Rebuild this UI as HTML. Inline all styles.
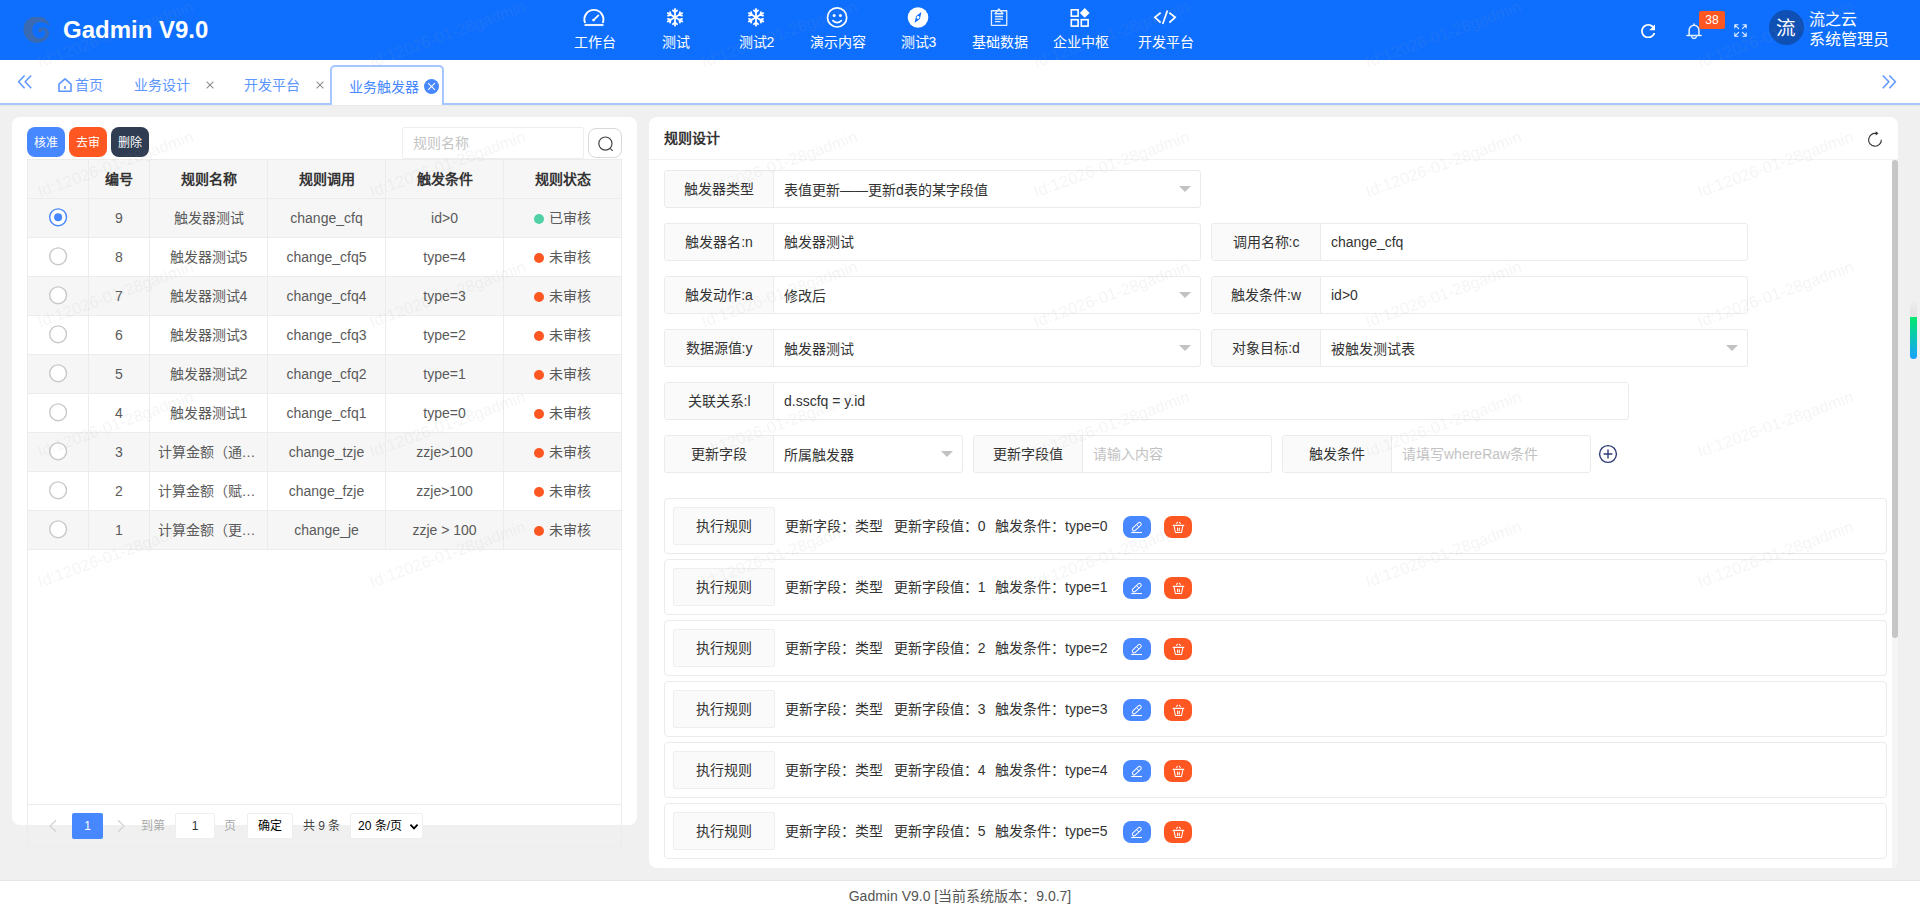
<!DOCTYPE html><html lang="zh-CN"><head><meta charset="utf-8"><title>Gadmin V9.0</title><style>
*{box-sizing:border-box;margin:0;padding:0}
html,body{width:1920px;height:911px;overflow:hidden}
body{font-family:"Liberation Sans",sans-serif;font-size:14px;color:#333;background:#f0f0f0;position:relative}
.abs{position:absolute}
svg{display:block}
#hd{position:absolute;left:0;top:0;width:1920px;height:60px;background:#0e6fff;color:#fff}
#logo{position:absolute;left:23px;top:17px;width:27px;height:27px}
#title{position:absolute;left:63px;top:15px;font-size:24px;font-weight:bold;line-height:30px;white-space:nowrap;letter-spacing:0}
.nav{position:absolute;top:0;height:60px;width:100px;margin-left:-50px;text-align:center;white-space:nowrap}
.nav svg{position:absolute;left:50%;top:6px;margin-left:-12px;width:22px;height:22px;overflow:visible}
.nav span{position:absolute;left:0;width:100px;top:32px;line-height:20px;font-size:14px}
#tabs{position:absolute;left:0;top:60px;width:1920px;height:45px;background:#fff;border-bottom:2px solid #a6c6ff}
.tab{position:absolute;top:15px;line-height:20px;font-size:14px;color:#5c96ff;white-space:nowrap}
.tx{position:absolute;top:19.5px;width:10px;height:10px}
#atab{position:absolute;left:330px;top:5px;width:114px;height:40px;border:2px solid #a6c6ff;border-bottom:0;border-radius:5px 5px 0 0;background:#fff}
#lcard{position:absolute;left:12px;top:117px;width:625px;height:708px;background:#fff;border-radius:8px}
#rcard{position:absolute;left:649px;top:117px;width:1249px;height:751px;background:#fff;border-radius:8px;overflow:hidden}
.btn{position:absolute;top:127px;width:38px;height:30px;border-radius:8px;color:#fff;font-size:12px;line-height:30px;padding-top:1px;text-align:center}
#tbl{position:absolute;left:27px;top:159px;width:595px;height:688px;border:1px solid #ececec}
.tr{position:absolute;left:0;width:593px;height:39px;border-bottom:1px solid #ececec}
.tr.g{background:#f6f6f6}
.td{position:absolute;top:0;height:38px;line-height:38px;text-align:center;border-right:1px solid #ececec;color:#5a5a5a;font-size:14px;white-space:nowrap;overflow:hidden}
.th .td{font-weight:bold;color:#333}
.c0{left:0;width:61px}.c1{left:61px;width:61px}.c2{left:122px;width:118px}.c3{left:240px;width:118px}.c4{left:358px;width:118px}.c5{left:476px;width:117px;border-right:0}
.rd{position:absolute;left:20px;top:8px;width:20px;height:20px}
.dot{display:inline-block;width:10px;height:10px;border-radius:50%;background:#ff5722;margin-right:5px;vertical-align:-0.5px}
.dot.ok{background:#4fd1a5}
.fi{position:absolute;height:38px;border:1px solid #ebebeb;border-radius:3px;background:#fff}
.fi .lb{position:absolute;left:0;top:0;width:109px;height:36px;line-height:36px;text-align:center;background:#fafafa;border-right:1px solid #ebebeb;border-radius:2px 0 0 2px;color:#333;white-space:nowrap}
.fi .v{position:absolute;left:119px;top:0;line-height:37px;white-space:nowrap;color:#333}
.fi .v.ph{color:#c2c2c2}
.fi .car{position:absolute;right:9px;top:15px;width:0;height:0;border-left:6px solid transparent;border-right:6px solid transparent;border-top:6px solid #c2c2c2}
.rule{position:absolute;left:15px;width:1223px;height:56px;border:1px solid #ebebeb;border-radius:4px}
.rule .lb{position:absolute;left:8px;top:8px;width:102px;height:38px;line-height:36px;text-align:center;background:#fafafa;border:1px solid #eee;border-radius:2px;color:#333}
.rule .t{position:absolute;left:120px;top:0;line-height:54px;white-space:nowrap;color:#333}
.rule .t i{font-style:normal;margin-left:10.7px}
.rule .b{position:absolute;top:17px;width:28px;height:22px;border-radius:8px}
.rule .b svg{position:absolute;left:8px;top:5px;width:12px;height:12px;overflow:visible}
#ft{position:absolute;left:0;top:880px;width:1920px;height:31px;background:#fff;border-top:1px solid #e6e6e6;text-align:center;line-height:31px;color:#555;font-size:14px}
.pg{position:absolute;font-size:12px;line-height:26px;white-space:nowrap}
</style></head><body>
<div id="hd">
<div id="logo"><svg viewBox="0 0 27 27" width="27" height="27"><path d="M26.9 9.6A13.4 13.4 0 1 0 26.2 17.6C26.4 14.2 24 10.6 20 10.6C17 10.6 15 11.8 15 13.3C15 14.7 16.4 15.3 17.7 15.1C18.7 14.9 19.3 14.4 19.2 13.9C18.6 13.3 18 13.3 17.7 13.4C19.2 12.2 21.5 12.6 22.2 14.8C23 17.2 21.8 20 18.5 21.1C14 22.4 9.4 19 9.4 13.3C9.4 8 13 5 16.7 5C21 5 24.5 7 26.9 9.6Z" fill="#3a6ab2"/></svg></div><div id="title">Gadmin V9.0</div>
<div class="nav" style="left:594.5px"><svg viewBox="0 0 22 22"><path d="M2.1 17A9.5 9.5 0 1 1 19.7 17" fill="none" stroke="#fff" stroke-width="1.9"/><path d="M1.5 19H20.5" stroke="#fff" stroke-width="2.1" opacity=".9"/><path d="M10.6 14.1L15.4 9.3" stroke="#fff" stroke-width="1.7" stroke-linecap="round"/><circle cx="10.6" cy="14.1" r="1.4" fill="#fff"/></svg><span>工作台</span></div>
<div class="nav" style="left:675.5px"><svg viewBox="0 0 22 22"><g fill="none" stroke="#fff" stroke-width="1.75" stroke-linecap="round"><g transform="rotate(0 11 11.3)"><path d="M11 11.3V2.9M11 6.3L8.9 4.4M11 6.3L13.1 4.4"/></g><g transform="rotate(60 11 11.3)"><path d="M11 11.3V2.9M11 6.3L8.9 4.4M11 6.3L13.1 4.4"/></g><g transform="rotate(120 11 11.3)"><path d="M11 11.3V2.9M11 6.3L8.9 4.4M11 6.3L13.1 4.4"/></g><g transform="rotate(180 11 11.3)"><path d="M11 11.3V2.9M11 6.3L8.9 4.4M11 6.3L13.1 4.4"/></g><g transform="rotate(240 11 11.3)"><path d="M11 11.3V2.9M11 6.3L8.9 4.4M11 6.3L13.1 4.4"/></g><g transform="rotate(300 11 11.3)"><path d="M11 11.3V2.9M11 6.3L8.9 4.4M11 6.3L13.1 4.4"/></g></g></svg><span>测试</span></div>
<div class="nav" style="left:756.5px"><svg viewBox="0 0 22 22"><g fill="none" stroke="#fff" stroke-width="1.75" stroke-linecap="round"><g transform="rotate(0 11 11.3)"><path d="M11 11.3V2.9M11 6.3L8.9 4.4M11 6.3L13.1 4.4"/></g><g transform="rotate(60 11 11.3)"><path d="M11 11.3V2.9M11 6.3L8.9 4.4M11 6.3L13.1 4.4"/></g><g transform="rotate(120 11 11.3)"><path d="M11 11.3V2.9M11 6.3L8.9 4.4M11 6.3L13.1 4.4"/></g><g transform="rotate(180 11 11.3)"><path d="M11 11.3V2.9M11 6.3L8.9 4.4M11 6.3L13.1 4.4"/></g><g transform="rotate(240 11 11.3)"><path d="M11 11.3V2.9M11 6.3L8.9 4.4M11 6.3L13.1 4.4"/></g><g transform="rotate(300 11 11.3)"><path d="M11 11.3V2.9M11 6.3L8.9 4.4M11 6.3L13.1 4.4"/></g></g></svg><span>测试2</span></div>
<div class="nav" style="left:837.5px"><svg viewBox="0 0 22 22"><circle cx="11.1" cy="11.4" r="9.6" fill="none" stroke="#fff" stroke-width="1.7"/><circle cx="8.1" cy="9.4" r="1.5" fill="#fff"/><circle cx="14.4" cy="9.4" r="1.5" fill="#fff"/><path d="M6.9 14.6Q11.1 18.8 15.4 14.6" fill="none" stroke="#fff" stroke-width="1.7" stroke-linecap="round"/></svg><span>演示内容</span></div>
<div class="nav" style="left:918.5px"><svg viewBox="0 0 22 22"><circle cx="11" cy="11.5" r="10.3" fill="#fff"/><path d="M14.3 6L13 12.7L7.6 17L9 10.3Z" fill="#0e6fff"/><circle cx="11" cy="11.5" r="1.45" fill="#fff"/></svg><span>测试3</span></div>
<div class="nav" style="left:999.5px"><svg viewBox="0 0 22 22"><g fill="none" stroke="#fff" stroke-width="1.3" stroke-linejoin="round" opacity=".88"><rect x="3.45" y="4.75" width="15.3" height="14.6"/><path d="M7 7.75L10.9 3L14.9 7.75Z"/><path d="M6.9 10.5H15M6.9 13.2H15M6.9 15.6H12.5"/></g></svg><span>基础数据</span></div>
<div class="nav" style="left:1080.5px"><svg viewBox="0 0 22 22"><g fill="none" stroke="#fff" stroke-width="1.6"><rect x="2.3" y="3.8" width="6.8" height="6.4"/><rect x="2.3" y="13.7" width="6.8" height="6.4"/><rect x="12.3" y="13.7" width="6.8" height="6.4"/></g><path d="M15.75 2.05L20.6 6.9L15.75 11.75L10.9 6.9Z" fill="#fff"/></svg><span>企业中枢</span></div>
<div class="nav" style="left:1165.5px"><svg viewBox="0 0 22 22"><path d="M6 7.25L0.9 11.3L6 16M16 7.25L21.2 11.3L16 16M13.1 5.4L9 17.25" fill="none" stroke="#fff" stroke-width="1.7" stroke-linecap="square" stroke-linejoin="miter"/></svg><span>开发平台</span></div>
<div class="abs" style="left:1640.8px;top:23.9px"><svg viewBox="4 4 16 16" width="14.6" height="14.4"><path fill="#fff" d="M17.65 6.35C16.2 4.9 14.21 4 12 4c-4.42 0-7.99 3.58-7.99 8s3.57 8 7.99 8c3.73 0 6.84-2.55 7.73-6h-2.08c-.82 2.33-3.04 4-5.65 4-3.31 0-6-2.69-6-6s2.69-6 6-6c1.66 0 3.14.69 4.22 1.78L13 11h7V4l-2.35 2.35z"/></svg></div>
<div class="abs" style="left:1685px;top:22px"><svg viewBox="0 0 18 18" width="18" height="18"><g fill="none" stroke="#fff" stroke-width="1.5" stroke-linecap="round" opacity=".9"><path d="M1.9 13.5H16.2M4.15 13.3V8.25A4.9 4.9 0 0 1 13.95 8.25V13.3M9.05 3.2V1.9"/><path d="M6.7 14.7A2.4 2.2 0 0 0 11.4 14.7"/></g></svg></div>
<div class="abs" style="left:1699px;top:11px;width:26px;height:18px;background:#ff5722;border-radius:2px;font-size:12px;line-height:18px;text-align:center;color:#fff">38</div>
<div class="abs" style="left:1733.7px;top:24px"><svg viewBox="0 0 13 13" width="13" height="13"><g fill="none" stroke="#fff" stroke-width="1.05" stroke-linecap="round" stroke-linejoin="round" opacity=".9"><path d="M0.8 4V0.8H4M0.8 0.8L4.6 4.6M9 0.8H12.2V4M12.2 0.8L8.4 4.6M0.8 9V12.2H4M0.8 12.2L4.6 8.4M12.2 9V12.2H9M12.2 12.2L8.4 8.4"/></g></svg></div>
<div class="abs" style="left:1769px;top:10px;width:35px;height:35px;border-radius:50%;background:#0f50b4;font-size:19.5px;line-height:37px;padding-right:1px;text-align:center;color:#fff">流</div>
<div class="abs" style="left:1809px;top:10px;font-size:16px;line-height:20px;white-space:nowrap">流之云<br>系统管理员</div>
</div>
<div id="tabs">
<svg class="abs" style="left:17px;top:14px" width="16" height="16" viewBox="0 0 16 16"><path d="M7.6 1.4L1.6 7.8L7.6 14.2M14.2 1.4L8.2 7.8L14.2 14.2" fill="none" stroke="#5c96ff" stroke-width="1.5"/></svg>
<svg class="abs" style="left:1881px;top:14px" width="16" height="16" viewBox="0 0 16 16"><path d="M1.8 1.4L7.8 7.8L1.8 14.2M8.4 1.4L14.4 7.8L8.4 14.2" fill="none" stroke="#5c96ff" stroke-width="1.5"/></svg>
<svg class="abs" style="left:57px;top:17px" width="16" height="16" viewBox="0 0 16 16"><path d="M2 7.2L8 1.8L14 7.2V14.2H2Z" fill="none" stroke="#5c96ff" stroke-width="1.6" stroke-linejoin="round"/><path d="M8 9V12" stroke="#5c96ff" stroke-width="1.6"/></svg>
<div class="tab" style="left:75px">首页</div>
<div class="tab" style="left:134px">业务设计</div>
<div class="tx" style="left:204.5px"><svg viewBox="0 0 10 10" width="10" height="10"><path d="M1.6 1.6L8.4 8.4M8.4 1.6L1.6 8.4" stroke="#8d8d8d" stroke-width="1.05" fill="none"/></svg></div>
<div class="tab" style="left:244px">开发平台</div>
<div class="tx" style="left:314.5px"><svg viewBox="0 0 10 10" width="10" height="10"><path d="M1.6 1.6L8.4 8.4M8.4 1.6L1.6 8.4" stroke="#8d8d8d" stroke-width="1.05" fill="none"/></svg></div>
<div id="atab"></div>
<div class="tab" style="left:349px;top:17px;color:#4787ff">业务触发器</div>
<div class="abs" style="left:424px;top:19px;width:15px;height:15px;border-radius:50%;background:#4787ff"><svg viewBox="0 0 15 15" width="15" height="15"><path d="M4.1 4.1L10.9 10.9M10.9 4.1L4.1 10.9" stroke="#fff" stroke-width="1.05" fill="none"/></svg></div>
</div>
<div class="abs" style="left:0;top:105px;width:1920px;height:1px;background:rgba(0,0,0,.025)"></div>
<div id="lcard"></div>
<div class="btn" style="left:27px;background:#4787ff">核准</div>
<div class="btn" style="left:69px;background:#ff5722">去审</div>
<div class="btn" style="left:111px;background:#2f3c52">删除</div>
<div class="abs" style="left:402px;top:127px;width:182px;height:32px;border:1px solid #eee;border-radius:2px;background:#fff;color:#c4c4c4;font-size:14px;line-height:30px;padding-left:10px">规则名称</div>
<div class="abs" style="left:588px;top:128px;width:34px;height:30px;border:1px solid #d9d9d9;border-radius:8px;background:#fff"><svg class="abs" style="left:8px;top:6px" width="18" height="18" viewBox="0 0 18 18"><circle cx="8.4" cy="8.6" r="6.6" fill="none" stroke="#444" stroke-width="1.2"/><path d="M13.2 13.4L15.6 15.8" stroke="#444" stroke-width="1.2"/></svg></div>
<div id="tbl">
<div class="tr th g" style="top:0"><div class="td c0"></div><div class="td c1">编号</div><div class="td c2">规则名称</div><div class="td c3">规则调用</div><div class="td c4">触发条件</div><div class="td c5">规则状态</div></div>
<div class="tr g" style="top:39px"><div class="td c0"><svg class="rd" viewBox="0 0 20 20"><circle cx="10.1" cy="10.3" r="8.4" fill="#fff" stroke="#4787ff" stroke-width="1.4"/><circle cx="10.1" cy="10.3" r="4" fill="#4787ff"/></svg></div><div class="td c1">9</div><div class="td c2">触发器测试</div><div class="td c3">change_cfq</div><div class="td c4">id&gt;0</div><div class="td c5"><span class="dot ok"></span>已审核</div></div>
<div class="tr" style="top:78px"><div class="td c0"><svg class="rd" viewBox="0 0 20 20"><circle cx="10.1" cy="10.3" r="8.4" fill="#fff" stroke="#c9c9c9" stroke-width="1.4"/></svg></div><div class="td c1">8</div><div class="td c2">触发器测试5</div><div class="td c3">change_cfq5</div><div class="td c4">type=4</div><div class="td c5"><span class="dot"></span>未审核</div></div>
<div class="tr g" style="top:117px"><div class="td c0"><svg class="rd" viewBox="0 0 20 20"><circle cx="10.1" cy="10.3" r="8.4" fill="#fff" stroke="#c9c9c9" stroke-width="1.4"/></svg></div><div class="td c1">7</div><div class="td c2">触发器测试4</div><div class="td c3">change_cfq4</div><div class="td c4">type=3</div><div class="td c5"><span class="dot"></span>未审核</div></div>
<div class="tr" style="top:156px"><div class="td c0"><svg class="rd" viewBox="0 0 20 20"><circle cx="10.1" cy="10.3" r="8.4" fill="#fff" stroke="#c9c9c9" stroke-width="1.4"/></svg></div><div class="td c1">6</div><div class="td c2">触发器测试3</div><div class="td c3">change_cfq3</div><div class="td c4">type=2</div><div class="td c5"><span class="dot"></span>未审核</div></div>
<div class="tr g" style="top:195px"><div class="td c0"><svg class="rd" viewBox="0 0 20 20"><circle cx="10.1" cy="10.3" r="8.4" fill="#fff" stroke="#c9c9c9" stroke-width="1.4"/></svg></div><div class="td c1">5</div><div class="td c2">触发器测试2</div><div class="td c3">change_cfq2</div><div class="td c4">type=1</div><div class="td c5"><span class="dot"></span>未审核</div></div>
<div class="tr" style="top:234px"><div class="td c0"><svg class="rd" viewBox="0 0 20 20"><circle cx="10.1" cy="10.3" r="8.4" fill="#fff" stroke="#c9c9c9" stroke-width="1.4"/></svg></div><div class="td c1">4</div><div class="td c2">触发器测试1</div><div class="td c3">change_cfq1</div><div class="td c4">type=0</div><div class="td c5"><span class="dot"></span>未审核</div></div>
<div class="tr g" style="top:273px"><div class="td c0"><svg class="rd" viewBox="0 0 20 20"><circle cx="10.1" cy="10.3" r="8.4" fill="#fff" stroke="#c9c9c9" stroke-width="1.4"/></svg></div><div class="td c1">3</div><div class="td c2" style="padding-right:4px">计算金额（通…</div><div class="td c3">change_tzje</div><div class="td c4">zzje&gt;100</div><div class="td c5"><span class="dot"></span>未审核</div></div>
<div class="tr" style="top:312px"><div class="td c0"><svg class="rd" viewBox="0 0 20 20"><circle cx="10.1" cy="10.3" r="8.4" fill="#fff" stroke="#c9c9c9" stroke-width="1.4"/></svg></div><div class="td c1">2</div><div class="td c2" style="padding-right:4px">计算金额（赋…</div><div class="td c3">change_fzje</div><div class="td c4">zzje&gt;100</div><div class="td c5"><span class="dot"></span>未审核</div></div>
<div class="tr g" style="top:351px"><div class="td c0"><svg class="rd" viewBox="0 0 20 20"><circle cx="10.1" cy="10.3" r="8.4" fill="#fff" stroke="#c9c9c9" stroke-width="1.4"/></svg></div><div class="td c1">1</div><div class="td c2" style="padding-right:4px">计算金额（更…</div><div class="td c3">change_je</div><div class="td c4">zzje &gt; 100</div><div class="td c5"><span class="dot"></span>未审核</div></div>
<div class="abs" style="left:0;top:644px;width:593px;height:1px;background:#ececec"></div>
</div>
<svg class="abs" style="left:48px;top:819px" width="10" height="14" viewBox="0 0 10 14"><path d="M8 1.2L2 7L8 12.8" fill="none" stroke="#d2d2d2" stroke-width="1.2"/></svg>
<div class="pg" style="left:72px;top:813px;width:31px;height:26px;background:#4787ff;color:#fff;text-align:center;border-radius:2px">1</div>
<svg class="abs" style="left:116px;top:819px" width="10" height="14" viewBox="0 0 10 14"><path d="M2 1.2L8 7L2 12.8" fill="none" stroke="#d2d2d2" stroke-width="1.2"/></svg>
<div class="pg" style="left:141px;top:813px;color:#a9a9a9">到第</div>
<div class="pg" style="left:175px;top:813px;width:40px;height:26px;background:#fff;border:1px solid #eee;border-radius:2px;text-align:center;line-height:24px;color:#333">1</div>
<div class="pg" style="left:224px;top:813px;color:#a9a9a9">页</div>
<div class="pg" style="left:247px;top:813px;width:46px;height:26px;background:#fff;border:1px solid #eee;border-radius:2px;text-align:center;line-height:24px;color:#000">确定</div>
<div class="pg" style="left:303px;top:813px;color:#444">共 9 条</div>
<div class="pg" style="left:350px;top:813px;width:73px;height:26px;background:#fff;border:1px solid #eee;border-radius:2px;line-height:24px;color:#000;padding-left:7px">20 条/页<svg class="abs" style="left:58px;top:9px" width="10" height="8" viewBox="0 0 10 8"><path d="M1.4 1.6L5 5.4L8.6 1.6" fill="none" stroke="#000" stroke-width="1.8"/></svg></div>
<div id="rcard">
<div class="abs" style="left:15px;top:11px;font-weight:bold;font-size:14px;line-height:20px;color:#333">规则设计</div>
<svg class="abs" style="left:1218px;top:15px;overflow:visible" width="16" height="16" viewBox="0 0 16 16"><path d="M14.4 7.8A6.4 6.4 0 1 1 9.1 1.5" fill="none" stroke="#333" stroke-width="1.15"/><path d="M8.5 -0.7L11.5 1.3L8.8 3.6Z" fill="#333"/></svg>
<div class="abs" style="left:0;top:42px;width:1249px;height:1px;background:#f2f2f2"></div>
<div class="fi" style="left:15px;top:53px;width:537px"><div class="lb">触发器类型</div><div class="v" style="top:1px">表值更新——更新d表的某字段值</div><div class="car"></div></div>
<div class="fi" style="left:15px;top:106px;width:537px"><div class="lb">触发器名:n</div><div class="v">触发器测试</div></div>
<div class="fi" style="left:562px;top:106px;width:537px"><div class="lb">调用名称:c</div><div class="v">change_cfq</div></div>
<div class="fi" style="left:15px;top:159px;width:537px"><div class="lb">触发动作:a</div><div class="v" style="top:1px">修改后</div><div class="car"></div></div>
<div class="fi" style="left:562px;top:159px;width:537px"><div class="lb">触发条件:w</div><div class="v">id&gt;0</div></div>
<div class="fi" style="left:15px;top:212px;width:537px"><div class="lb">数据源值:y</div><div class="v" style="top:1px">触发器测试</div><div class="car"></div></div>
<div class="fi" style="left:562px;top:212px;width:537px"><div class="lb">对象目标:d</div><div class="v" style="top:1px">被触发测试表</div><div class="car"></div></div>
<div class="fi" style="left:15px;top:265px;width:965px"><div class="lb">关联关系:l</div><div class="v">d.sscfq = y.id</div></div>
<div class="fi" style="left:15px;top:318px;width:299px"><div class="lb">更新字段</div><div class="v" style="top:1px">所属触发器</div><div class="car"></div></div>
<div class="fi" style="left:324px;top:318px;width:299px"><div class="lb">更新字段值</div><div class="v ph">请输入内容</div></div>
<div class="fi" style="left:633px;top:318px;width:309px"><div class="lb">触发条件</div><div class="v ph">请填写whereRaw条件</div></div>
<svg class="abs" style="left:949px;top:326.5px" width="20" height="20" viewBox="0 0 20 20"><circle cx="10" cy="10" r="8.4" fill="none" stroke="#2b3a78" stroke-width="1.4"/><path d="M5.6 10H14.4M10 5.6V14.4" stroke="#2b3a78" stroke-width="1.4"/></svg>
<div class="rule" style="top:381px"><div class="lb">执行规则</div><div class="t">更新字段：类型<i>更新字段值：0</i><i style="margin-left:9.6px">触发条件：type=0</i></div><div class="b" style="left:458px;background:#4787ff"><svg viewBox="0 0 12 12"><path d="M3.1 8.2L8.5 3.2" stroke="#fff" stroke-width="4.5" stroke-linecap="round"/><path d="M3.1 8.2L8.5 3.2" stroke="#4787ff" stroke-width="2.5" stroke-linecap="round"/><path d="M5.9 3.9L7.8 5.8" stroke="#fff" stroke-width="1"/><path d="M0.2 11.5H11" stroke="#fff" stroke-width="1.1"/></svg></div><div class="b" style="left:499px;background:#ff5722"><svg viewBox="0 0 12 12"><g fill="none" stroke="#fff" stroke-width="1.05" stroke-linecap="round" stroke-linejoin="round"><path d="M1.2 4.3H11.7" stroke-width="1.3"/><path d="M4.6 2.4L5.5 1.2M8.3 2.4L7.4 1.2"/><path d="M2.1 5.2L3.4 11.5H9.5L10.8 5.2"/><path d="M5.6 7V9.7M7.3 7V9.7"/></g></svg></div></div>
<div class="rule" style="top:442px"><div class="lb">执行规则</div><div class="t">更新字段：类型<i>更新字段值：1</i><i style="margin-left:9.6px">触发条件：type=1</i></div><div class="b" style="left:458px;background:#4787ff"><svg viewBox="0 0 12 12"><path d="M3.1 8.2L8.5 3.2" stroke="#fff" stroke-width="4.5" stroke-linecap="round"/><path d="M3.1 8.2L8.5 3.2" stroke="#4787ff" stroke-width="2.5" stroke-linecap="round"/><path d="M5.9 3.9L7.8 5.8" stroke="#fff" stroke-width="1"/><path d="M0.2 11.5H11" stroke="#fff" stroke-width="1.1"/></svg></div><div class="b" style="left:499px;background:#ff5722"><svg viewBox="0 0 12 12"><g fill="none" stroke="#fff" stroke-width="1.05" stroke-linecap="round" stroke-linejoin="round"><path d="M1.2 4.3H11.7" stroke-width="1.3"/><path d="M4.6 2.4L5.5 1.2M8.3 2.4L7.4 1.2"/><path d="M2.1 5.2L3.4 11.5H9.5L10.8 5.2"/><path d="M5.6 7V9.7M7.3 7V9.7"/></g></svg></div></div>
<div class="rule" style="top:503px"><div class="lb">执行规则</div><div class="t">更新字段：类型<i>更新字段值：2</i><i style="margin-left:9.6px">触发条件：type=2</i></div><div class="b" style="left:458px;background:#4787ff"><svg viewBox="0 0 12 12"><path d="M3.1 8.2L8.5 3.2" stroke="#fff" stroke-width="4.5" stroke-linecap="round"/><path d="M3.1 8.2L8.5 3.2" stroke="#4787ff" stroke-width="2.5" stroke-linecap="round"/><path d="M5.9 3.9L7.8 5.8" stroke="#fff" stroke-width="1"/><path d="M0.2 11.5H11" stroke="#fff" stroke-width="1.1"/></svg></div><div class="b" style="left:499px;background:#ff5722"><svg viewBox="0 0 12 12"><g fill="none" stroke="#fff" stroke-width="1.05" stroke-linecap="round" stroke-linejoin="round"><path d="M1.2 4.3H11.7" stroke-width="1.3"/><path d="M4.6 2.4L5.5 1.2M8.3 2.4L7.4 1.2"/><path d="M2.1 5.2L3.4 11.5H9.5L10.8 5.2"/><path d="M5.6 7V9.7M7.3 7V9.7"/></g></svg></div></div>
<div class="rule" style="top:564px"><div class="lb">执行规则</div><div class="t">更新字段：类型<i>更新字段值：3</i><i style="margin-left:9.6px">触发条件：type=3</i></div><div class="b" style="left:458px;background:#4787ff"><svg viewBox="0 0 12 12"><path d="M3.1 8.2L8.5 3.2" stroke="#fff" stroke-width="4.5" stroke-linecap="round"/><path d="M3.1 8.2L8.5 3.2" stroke="#4787ff" stroke-width="2.5" stroke-linecap="round"/><path d="M5.9 3.9L7.8 5.8" stroke="#fff" stroke-width="1"/><path d="M0.2 11.5H11" stroke="#fff" stroke-width="1.1"/></svg></div><div class="b" style="left:499px;background:#ff5722"><svg viewBox="0 0 12 12"><g fill="none" stroke="#fff" stroke-width="1.05" stroke-linecap="round" stroke-linejoin="round"><path d="M1.2 4.3H11.7" stroke-width="1.3"/><path d="M4.6 2.4L5.5 1.2M8.3 2.4L7.4 1.2"/><path d="M2.1 5.2L3.4 11.5H9.5L10.8 5.2"/><path d="M5.6 7V9.7M7.3 7V9.7"/></g></svg></div></div>
<div class="rule" style="top:625px"><div class="lb">执行规则</div><div class="t">更新字段：类型<i>更新字段值：4</i><i style="margin-left:9.6px">触发条件：type=4</i></div><div class="b" style="left:458px;background:#4787ff"><svg viewBox="0 0 12 12"><path d="M3.1 8.2L8.5 3.2" stroke="#fff" stroke-width="4.5" stroke-linecap="round"/><path d="M3.1 8.2L8.5 3.2" stroke="#4787ff" stroke-width="2.5" stroke-linecap="round"/><path d="M5.9 3.9L7.8 5.8" stroke="#fff" stroke-width="1"/><path d="M0.2 11.5H11" stroke="#fff" stroke-width="1.1"/></svg></div><div class="b" style="left:499px;background:#ff5722"><svg viewBox="0 0 12 12"><g fill="none" stroke="#fff" stroke-width="1.05" stroke-linecap="round" stroke-linejoin="round"><path d="M1.2 4.3H11.7" stroke-width="1.3"/><path d="M4.6 2.4L5.5 1.2M8.3 2.4L7.4 1.2"/><path d="M2.1 5.2L3.4 11.5H9.5L10.8 5.2"/><path d="M5.6 7V9.7M7.3 7V9.7"/></g></svg></div></div>
<div class="rule" style="top:686px"><div class="lb">执行规则</div><div class="t">更新字段：类型<i>更新字段值：5</i><i style="margin-left:9.6px">触发条件：type=5</i></div><div class="b" style="left:458px;background:#4787ff"><svg viewBox="0 0 12 12"><path d="M3.1 8.2L8.5 3.2" stroke="#fff" stroke-width="4.5" stroke-linecap="round"/><path d="M3.1 8.2L8.5 3.2" stroke="#4787ff" stroke-width="2.5" stroke-linecap="round"/><path d="M5.9 3.9L7.8 5.8" stroke="#fff" stroke-width="1"/><path d="M0.2 11.5H11" stroke="#fff" stroke-width="1.1"/></svg></div><div class="b" style="left:499px;background:#ff5722"><svg viewBox="0 0 12 12"><g fill="none" stroke="#fff" stroke-width="1.05" stroke-linecap="round" stroke-linejoin="round"><path d="M1.2 4.3H11.7" stroke-width="1.3"/><path d="M4.6 2.4L5.5 1.2M8.3 2.4L7.4 1.2"/><path d="M2.1 5.2L3.4 11.5H9.5L10.8 5.2"/><path d="M5.6 7V9.7M7.3 7V9.7"/></g></svg></div></div>
<div class="abs" style="left:1243px;top:43px;width:6px;height:708px;background:#f5f5f5"></div>
<div class="abs" style="left:1243px;top:43px;width:6px;height:478px;background:#c6c6c6;border-radius:3px"></div>
</div>
<div class="abs" style="left:1910px;top:301px;width:7px;height:58px;border-radius:4px;background:linear-gradient(#eeeeee,#e4e4e4 12px)"></div>
<div class="abs" style="left:1910px;top:317px;width:7px;height:42px;border-radius:0 0 4px 4px;background:linear-gradient(#00e96e,#19a0ff)"></div>
<svg class="abs" style="left:0;top:0;pointer-events:none" width="1920" height="911" viewBox="0 0 1920 911"><g font-family="Liberation Sans, sans-serif" font-size="16.35" fill="#9a9a9a" fill-opacity=".11"><text transform="translate(40 67.5) rotate(-20)">Id:12026-01-28gadmin</text><text transform="translate(372 67.5) rotate(-20)">Id:12026-01-28gadmin</text><text transform="translate(704 67.5) rotate(-20)">Id:12026-01-28gadmin</text><text transform="translate(1036 67.5) rotate(-20)">Id:12026-01-28gadmin</text><text transform="translate(1368 67.5) rotate(-20)">Id:12026-01-28gadmin</text><text transform="translate(1700 67.5) rotate(-20)">Id:12026-01-28gadmin</text><text transform="translate(40 197.5) rotate(-20)">Id:12026-01-28gadmin</text><text transform="translate(372 197.5) rotate(-20)">Id:12026-01-28gadmin</text><text transform="translate(704 197.5) rotate(-20)">Id:12026-01-28gadmin</text><text transform="translate(1036 197.5) rotate(-20)">Id:12026-01-28gadmin</text><text transform="translate(1368 197.5) rotate(-20)">Id:12026-01-28gadmin</text><text transform="translate(1700 197.5) rotate(-20)">Id:12026-01-28gadmin</text><text transform="translate(40 327.5) rotate(-20)">Id:12026-01-28gadmin</text><text transform="translate(372 327.5) rotate(-20)">Id:12026-01-28gadmin</text><text transform="translate(704 327.5) rotate(-20)">Id:12026-01-28gadmin</text><text transform="translate(1036 327.5) rotate(-20)">Id:12026-01-28gadmin</text><text transform="translate(1368 327.5) rotate(-20)">Id:12026-01-28gadmin</text><text transform="translate(1700 327.5) rotate(-20)">Id:12026-01-28gadmin</text><text transform="translate(40 457.5) rotate(-20)">Id:12026-01-28gadmin</text><text transform="translate(372 457.5) rotate(-20)">Id:12026-01-28gadmin</text><text transform="translate(704 457.5) rotate(-20)">Id:12026-01-28gadmin</text><text transform="translate(1036 457.5) rotate(-20)">Id:12026-01-28gadmin</text><text transform="translate(1368 457.5) rotate(-20)">Id:12026-01-28gadmin</text><text transform="translate(1700 457.5) rotate(-20)">Id:12026-01-28gadmin</text><text transform="translate(40 587.5) rotate(-20)">Id:12026-01-28gadmin</text><text transform="translate(372 587.5) rotate(-20)">Id:12026-01-28gadmin</text><text transform="translate(704 587.5) rotate(-20)">Id:12026-01-28gadmin</text><text transform="translate(1036 587.5) rotate(-20)">Id:12026-01-28gadmin</text><text transform="translate(1368 587.5) rotate(-20)">Id:12026-01-28gadmin</text><text transform="translate(1700 587.5) rotate(-20)">Id:12026-01-28gadmin</text></g></svg>
<div id="ft">Gadmin V9.0 [当前系统版本：9.0.7]</div>
</body></html>
